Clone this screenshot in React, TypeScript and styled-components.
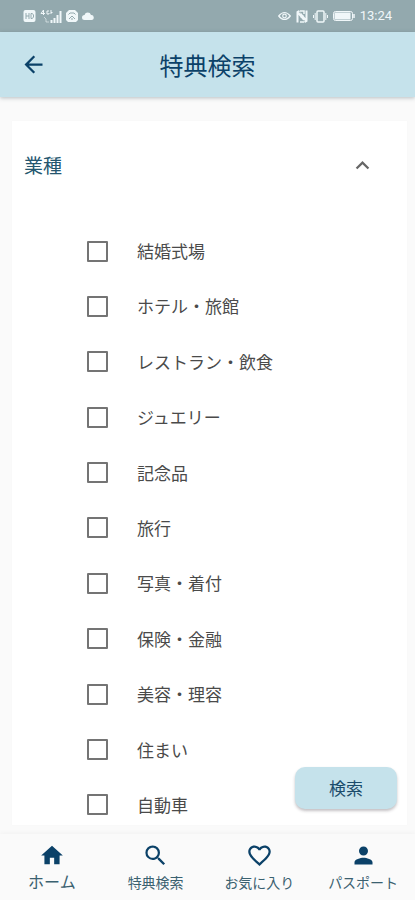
import React, { useState } from "react";
import styled, { createGlobalStyle } from "styled-components";
import {
  MdArrowBack,
  MdExpandLess,
  MdExpandMore,
  MdFavoriteBorder,
  MdHome,
  MdPerson,
  MdSearch,
} from "react-icons/md";

const navy = "#0b4168";
const paleBlue = "#c5e2eb";

const GlobalStyle = createGlobalStyle`
  *, *::before, *::after { box-sizing: border-box; }
  body {
    margin: 0;
    background: #fafafa;
    font-family: "Noto Sans CJK JP", "Noto Sans", sans-serif;
    color: #4a4a4a;
  }
  button, input { font: inherit; margin: 0; }
`;

const Screen = styled.div`
  display: flex;
  flex-direction: column;
  min-height: 100vh;
`;

const StatusBar = styled.div`
  display: flex;
  justify-content: space-between;
  align-items: center;
  height: 32px;
  padding: 0 23px;
  background: #93a9ae;
  color: #f0f7f9;
  font-family: Roboto, sans-serif;
  font-size: 13px;
  line-height: 16px;
`;

const StatusGroup = styled.div<{ $gap: number }>`
  display: flex;
  align-items: center;
  gap: ${({ $gap }) => $gap}px;
  svg { display: block; }
`;

const AppBar = styled.header`
  display: grid;
  grid-template-columns: 66px 1fr 66px;
  align-items: center;
  height: 65px;
  background: ${paleBlue};
  box-shadow: 0 1px 4px rgba(60, 80, 90, 0.35);
  color: ${navy};
`;

const IconButton = styled.button`
  display: flex;
  align-items: center;
  justify-content: center;
  justify-self: center;
  width: 48px;
  height: 48px;
  padding: 0;
  border: 0;
  background: none;
  color: inherit;
  cursor: pointer;
`;

const Title = styled.h1`
  margin: 0;
  text-align: center;
  font-size: 24px;
  line-height: 36px;
  font-weight: 400;
`;

const Content = styled.main`
  display: flex;
  flex: 1;
  flex-direction: column;
  padding: 24px 8px 9px 12px;
`;

const Card = styled.section`
  position: relative;
  display: flex;
  flex: 1;
  flex-direction: column;
  background: #fff;
  box-shadow: 0 0 3px rgba(0, 0, 0, 0.02);
`;

const SectionToggle = styled.button`
  display: flex;
  align-items: center;
  justify-content: space-between;
  height: 88px;
  padding: 0 31px 0 12px;
  border: 0;
  background: none;
  color: #24566f;
  font-size: 19px;
  line-height: 28px;
  font-weight: 400;
  cursor: pointer;
  svg { color: #666; }
`;

const OptionList = styled.ul`
  display: flex;
  flex: 1;
  flex-direction: column;
  justify-content: space-between;
  margin: 0;
  padding: 22px 0 0 75px;
  list-style: none;
`;

const Option = styled.label`
  display: flex;
  align-items: center;
  gap: 29px;
  width: fit-content;
  height: 40px;
  font-size: 17px;
  line-height: 24px;
  cursor: pointer;
`;

const Checkbox = styled.input`
  appearance: none;
  width: 21px;
  height: 21px;
  border: 2px solid #747474;
  border-radius: 1px;
  background: #fff;
  &:checked {
    background: ${navy};
    border-color: ${navy};
    box-shadow: inset 0 0 0 3px #fff;
  }
`;

const SearchButton = styled.button`
  position: absolute;
  right: 10px;
  bottom: 16px;
  width: 102px;
  height: 42px;
  padding: 0;
  border: 0;
  border-radius: 10px;
  background: ${paleBlue};
  box-shadow: 0 2px 3px rgba(60, 50, 60, 0.3);
  color: #1b4c6c;
  font-size: 17px;
  line-height: 24px;
  cursor: pointer;
`;

const BottomNav = styled.nav`
  display: grid;
  grid-template-columns: repeat(4, 1fr);
  height: 66px;
  background: #fafafa;
  box-shadow: 0 -1px 5px rgba(0, 0, 0, 0.04);
`;

const NavLink = styled.a<{ $active?: boolean }>`
  display: flex;
  flex-direction: column;
  align-items: center;
  padding-top: 8px;
  color: #3a6170;
  font-size: ${({ $active }) => ($active ? 16 : 14)}px;
  line-height: ${({ $active }) => ($active ? 24 : 26)}px;
  text-decoration: none;
  white-space: nowrap;
  svg { color: ${navy}; height: 27px; }
`;

const options = [
  "結婚式場",
  "ホテル・旅館",
  "レストラン・飲食",
  "ジュエリー",
  "記念品",
  "旅行",
  "写真・着付",
  "保険・金融",
  "美容・理容",
  "住まい",
  "自動車",
];

const HdIcon = () => (
  <svg width="13" height="12" viewBox="0 0 13 12" aria-hidden="true">
    <rect x="0.5" width="12" height="12" rx="2" fill="currentColor" />
    <path d="M3 3v6M6 3v6M3 6h3M8 3.5h1l1.5 1.2v2.6L9 8.5H8z" fill="none" stroke="#93a9ae" />
  </svg>
);

const SignalIcon = () => (
  <svg width="22" height="15" viewBox="0 0 22 15" fill="none" stroke="currentColor" aria-hidden="true">
    <path d="M3.500 6V1L1 4.500h4M9 2H7v3h2V4M11 1v4M11 3.500h1.500" />
    <path d="M4 8l2 2v3h3" opacity="0.6" />
    <path d="M11.500 14v-3M14.500 14V9M17.500 14V6M20.500 14V2" strokeWidth="2" />
  </svg>
);

const CardIcon = () => (
  <svg width="12" height="12" viewBox="0 0 12 12" aria-hidden="true">
    <path d="M3 0h6l3 3v7l-2 2H2l-2-2V3z" fill="currentColor" />
    <path d="M2.500 4.500L4 3h4l1.500 1.500M3 9l3-3 3 3M5 9h2" fill="none" stroke="#93a9ae" />
  </svg>
);

const CloudIcon = () => (
  <svg width="12" height="10" viewBox="0 0 12 10" aria-hidden="true">
    <path d="M2.500 9a2.500 2.500 0 0 1 0-5 3.400 3.400 0 0 1 6.500 0A2.500 2.500 0 0 1 9.500 9z" fill="currentColor" />
  </svg>
);

const EyeIcon = () => (
  <svg width="13" height="10" viewBox="0 0 13 10" fill="none" stroke="currentColor" aria-hidden="true">
    <path d="M.7 5Q6.500-2 12.300 5 6.500 12 .7 5z" strokeWidth="1.200" />
    <circle cx="6.500" cy="5" r="1.800" strokeWidth="1.200" />
  </svg>
);

const NfcIcon = () => (
  <svg width="12" height="13" viewBox="0 0 12 13" fill="none" stroke="currentColor" aria-hidden="true">
    <path d="M1.500 12.500V2l2-1M1.500 2l5 6V5M10.500.5V11l-2 1M10.500 11l-5-6v3" strokeWidth="2" />
    <path d="M4 1h4v3M4 12h4" strokeWidth="1.500" />
  </svg>
);

const VibrateIcon = () => (
  <svg width="15" height="13" viewBox="0 0 15 13" fill="none" stroke="currentColor" aria-hidden="true">
    <rect x="4" y="1" width="7" height="11" rx="1" strokeWidth="1.500" />
    <path d="M2.200 3v7M.5 5v3M12.800 3v7M14.500 5v3" />
  </svg>
);

const BatteryIcon = () => (
  <svg width="22" height="10" viewBox="0 0 22 10" fill="none" stroke="currentColor" aria-hidden="true">
    <rect x=".5" y=".5" width="19" height="9" rx="2" />
    <rect x="2" y="2" width="15" height="6" fill="currentColor" />
    <path d="M21 3v4" strokeWidth="1.500" />
  </svg>
);

export default function App() {
  const [open, setOpen] = useState(true);

  return (
    <>
      <GlobalStyle />
      <Screen>
        <StatusBar>
          <StatusGroup $gap={4}>
            <HdIcon />
            <SignalIcon />
            <CardIcon />
            <CloudIcon />
          </StatusGroup>
          <StatusGroup $gap={5}>
            <EyeIcon />
            <NfcIcon />
            <VibrateIcon />
            <BatteryIcon />
            <span>13:24</span>
          </StatusGroup>
        </StatusBar>

        <AppBar>
          <IconButton type="button" aria-label="戻る">
            <MdArrowBack size={27} />
          </IconButton>
          <Title>特典検索</Title>
        </AppBar>

        <Content>
          <Card>
            <SectionToggle type="button" aria-expanded={open} onClick={() => setOpen(!open)}>
              業種
              {open ? <MdExpandLess size={27} /> : <MdExpandMore size={27} />}
            </SectionToggle>
            {open && (
              <OptionList>
                {options.map((name) => (
                  <li key={name}>
                    <Option>
                      <Checkbox type="checkbox" name="category" value={name} />
                      {name}
                    </Option>
                  </li>
                ))}
              </OptionList>
            )}
            <SearchButton type="button">検索</SearchButton>
          </Card>
        </Content>

        <BottomNav>
          <NavLink href="#home" $active>
            <MdHome size={26} />
            ホーム
          </NavLink>
          <NavLink href="#search">
            <MdSearch size={27} />
            特典検索
          </NavLink>
          <NavLink href="#favorites">
            <MdFavoriteBorder size={27} />
            お気に入り
          </NavLink>
          <NavLink href="#passport">
            <MdPerson size={27} />
            パスポート
          </NavLink>
        </BottomNav>
      </Screen>
    </>
  );
}
